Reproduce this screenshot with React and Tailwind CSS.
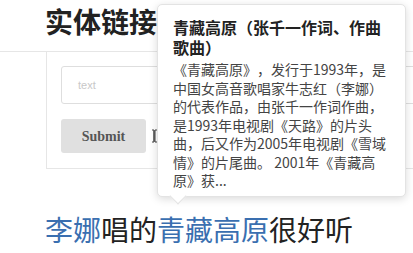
const cjk = { fontFamily: '"Noto Sans CJK SC", "Noto Sans", sans-serif' };

const bodyLines = [
  "《青藏高原》，发行于1993年，是",
  "中国女高音歌唱家牛志红（李娜）",
  "的代表作品，由张千一作词作曲，",
  "是1993年电视剧《天路》的片头",
  "曲，后又作为2005年电视剧《雪域",
  "情》的片尾曲。 2001年《青藏高",
  "原》获...",
];

function Tooltip() {
  return (
    <div className="absolute left-[157px] top-[4px] w-[249px] h-[193px] bg-white border border-[#e3e3e3] rounded-[5px] shadow-[0_2px_8px_rgba(0,0,0,0.15)] pt-[12px] px-[15px] [text-spacing-trim:space-all]" style={cjk}>
      <div className="text-[16px] font-bold leading-[20px] text-[#222]">
        <div className="whitespace-nowrap">青藏高原（张千一作词、作曲</div>
        <div className="whitespace-nowrap">歌曲）</div>
      </div>
      <div className="mt-[3px] text-[14px] leading-[18.5px] text-[#444]">
        {bodyLines.map((line) => (
          <div key={line} className="whitespace-nowrap">{line}</div>
        ))}
      </div>
      <div className="absolute left-[14px] bottom-[-6px] w-[12px] h-[12px] rotate-45 bg-white border-r border-b border-[#e3e3e3]" />
    </div>
  );
}

export default function App() {
  return (
    <div lang="zh-CN" className="relative w-[413px] h-[253px] overflow-hidden bg-white" style={cjk}>
      <div className="h-[52px] border-b border-[#e6e6e6] pl-[45px] pt-[4px]">
        <h1 className="text-[28px] font-bold leading-[34px] text-[#222]">实体链接</h1>
      </div>

      <div className="ml-[46px] w-[400px] border-l border-b border-[#e6e6e6] px-[14px] pt-[14px] pb-[15px]">
        <div className="h-[38px] border border-[#dedede] rounded-[3px] flex items-center pl-[16px]">
          <span className="text-[11px] text-[#c8c8c8]" style={{ fontFamily: '"Liberation Sans", sans-serif' }}>text</span>
        </div>
        <div className="mt-[15px] flex items-center">
          <button className="w-[85px] h-[34px] rounded-[3px] bg-[#e0e0e0] text-[14px] font-bold text-[#555]" style={{ fontFamily: '"Liberation Serif", serif' }}>
            Submit
          </button>
          <svg width="7" height="14" viewBox="0 0 7 14" className="ml-[5px]">
            <path d="M1 1h2v12H1M6 1H4v12h2M3 1.5v11" stroke="#444" strokeWidth="1" fill="none" />
          </svg>
        </div>
      </div>

      <p className="mt-[42px] pl-[45px] text-[28px] leading-[36px] text-[#222] font-normal whitespace-nowrap">
        <a className="text-[#3a6fb0]">李娜</a>唱的<a className="text-[#3a6fb0]">青藏高原</a>很好听
      </p>

      <Tooltip />
    </div>
  );
}
